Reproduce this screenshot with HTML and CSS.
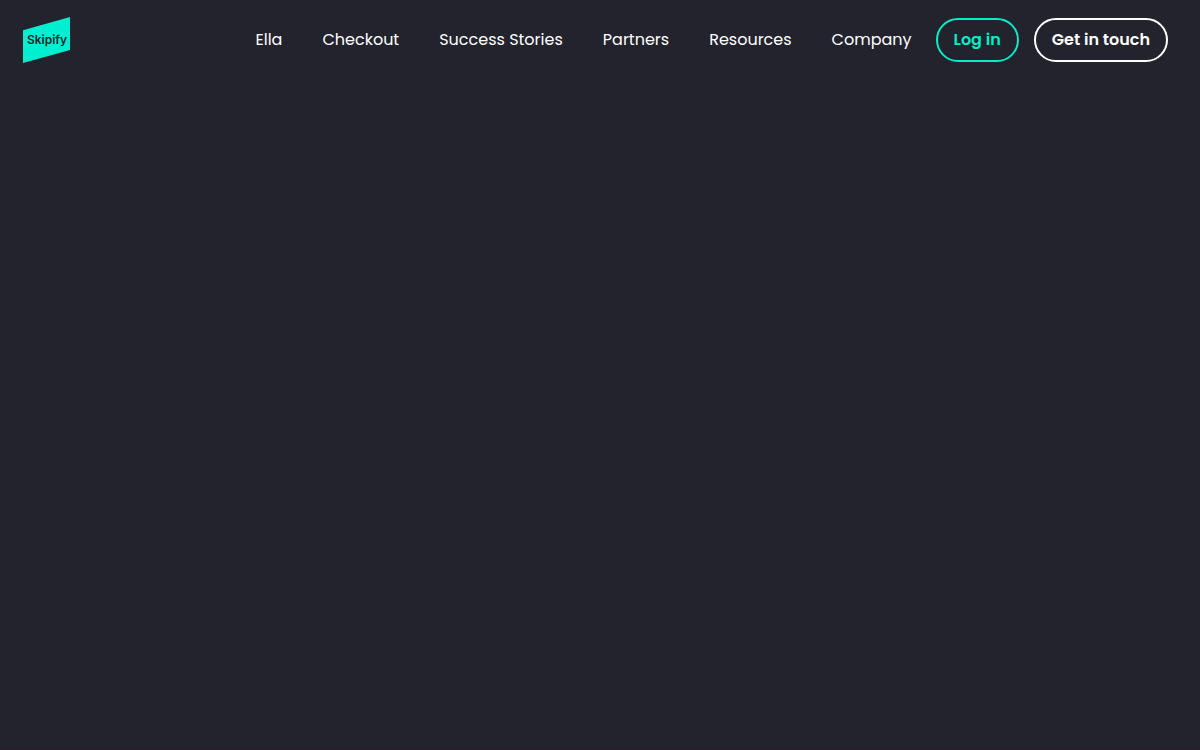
FILE: index.html
```html
<!DOCTYPE html>
<html lang="en">
<head>
<meta charset="utf-8">
<meta name="viewport" content="width=device-width, initial-scale=1">
<title>Skipify</title>
<link rel="stylesheet" href="styles.css">
</head>
<body>
<header class="header">
  <a class="logo" href="#" aria-label="Skipify">
    <svg class="logo-mark" viewBox="0 0 47 46" aria-hidden="true">
      <path class="logo-shape" d="M0 13.3 47 0V33L0 46Z"/>
      <text class="logo-text" x="24" y="27" text-anchor="middle">Skipify</text>
    </svg>
  </a>
  <nav class="nav" aria-label="Main">
    <a href="#">Ella</a>
    <a href="#">Checkout</a>
    <a href="#">Success Stories</a>
    <a href="#">Partners</a>
    <a href="#">Resources</a>
    <a href="#">Company</a>
  </nav>
  <div class="actions">
    <a class="button button-accent" href="#">Log in</a>
    <a class="button" href="#">Get in touch</a>
  </div>
</header>
<main class="main"></main>
</body>
</html>
```
FILE: styles.css
```css
* {
  box-sizing: border-box;
}

body {
  display: flex;
  flex-direction: column;
  min-height: 100vh;
  margin: 0;
  background: #23232d;
  color: #fff;
  font: 16px/24px Poppins, Inter, "Open Sans", sans-serif;
}

a {
  color: inherit;
  text-decoration: none;
}

.header {
  display: flex;
  align-items: center;
  height: 80px;
  padding: 0 32px 0 23px;
}

.logo-mark {
  display: block;
  width: 47px;
  height: 46px;
}

.logo-shape {
  fill: #00efd1;
}

.logo-text {
  fill: #23232d;
  font-family: Inter, "Liberation Sans", sans-serif;
  font-size: 12px;
  font-weight: 600;
}

.nav {
  display: flex;
  gap: 40px;
  margin-left: auto;
}

.actions {
  display: flex;
  gap: 15px;
  margin-left: 24px;
}

.button {
  padding: 8px 16px;
  border: 2px solid #fff;
  border-radius: 22px;
  font-weight: 600;
  white-space: nowrap;
}

.button-accent {
  border-color: #08ecca;
  color: #08ecca;
}

.main {
  flex: 1;
  border-bottom: 2px solid #261f2b;
}
```
